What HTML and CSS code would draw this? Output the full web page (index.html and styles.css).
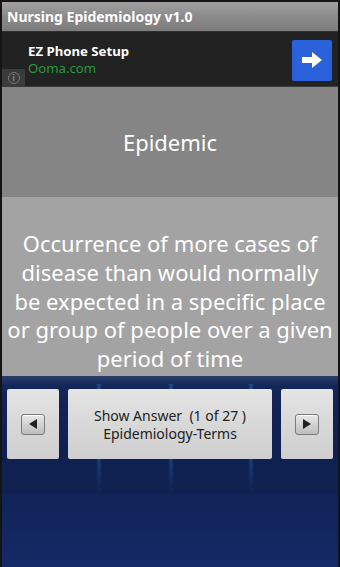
FILE: index.html
```html
<!DOCTYPE html>
<html>
<head>
<meta charset="utf-8">
<link rel="stylesheet" href="styles.css">
</head>
<body>
<div class="screen">
  <div class="titlebar">Nursing Epidemiology v1.0</div>
  <div class="ad">
    <div class="ad-info"><span class="ad-i">i</span></div>
    <div class="ad-text">
      <div class="ad-title">EZ Phone Setup</div>
      <div class="ad-url">Ooma.com</div>
    </div>
    <div class="ad-go">
      <svg width="22" height="18" viewBox="0 0 22 18"><path d="M1 6h10V1l10 8-10 8v-5H1z" fill="#fff"/></svg>
    </div>
  </div>
  <div class="term">Epidemic</div>
  <div class="definition">Occurrence of more cases of disease than would normally be expected in a specific place or group of people over a given period of time</div>
  <div class="bottom">
    <div class="controls">
      <div class="btn btn-side">
        <span class="arrow-box"><svg width="10" height="12" viewBox="0 0 10 12"><path d="M9 1L1 6l8 5z" fill="#222"/></svg></span>
      </div>
      <div class="btn btn-main">
        <div>Show Answer&nbsp; (1 of 27 )</div>
        <div>Epidemiology-Terms</div>
      </div>
      <div class="btn btn-side">
        <span class="arrow-box"><svg width="10" height="12" viewBox="0 0 10 12"><path d="M1 1l8 5-8 5z" fill="#222"/></svg></span>
      </div>
    </div>
  </div>
</div>
</body>
</html>
```
FILE: styles.css
```css
html, body {
  margin: 0;
  padding: 0;
  background: #111;
}
.screen {
  width: 336px;
  height: 565px;
  border: 2px solid #141414;
  border-bottom-width: 0;
  display: flex;
  flex-direction: column;
  font-family: "Noto Sans", "Open Sans", sans-serif;
  overflow: hidden;
}
.titlebar {
  height: 29px;
  background: linear-gradient(#a2a2a2, #8a8a8a 50%, #7c7c7c);
  color: #fff;
  font-weight: bold;
  font-size: 14px;
  line-height: 29px;
  padding-left: 5px;
  border-bottom: 1px solid #1d2d66;
  flex-shrink: 0;
}
.ad {
  height: 54px;
  background: #222;
  display: flex;
  align-items: center;
  position: relative;
  flex-shrink: 0;
  border-bottom: 1px solid #3a3a3a;
}
.ad-info {
  position: absolute;
  left: 0;
  bottom: 0;
  width: 23px;
  height: 17px;
  background: #3b3b3b;
  display: flex;
  align-items: center;
  justify-content: center;
}
.ad-i {
  width: 10px;
  height: 10px;
  border: 1.5px solid #777;
  border-radius: 50%;
  color: #777;
  font-size: 9px;
  font-weight: bold;
  line-height: 10px;
  text-align: center;
  font-family: "DejaVu Sans", sans-serif;
}
.ad-text {
  flex: 1;
  padding-left: 26px;
  padding-top: 1px;
}
.ad-title {
  color: #fff;
  font-weight: bold;
  font-size: 13.2px;
  line-height: 18px;
}
.ad-url {
  color: #249a3c;
  font-size: 13.2px;
  line-height: 17px;
}
.ad-go {
  width: 40px;
  height: 41px;
  background: #2b62db;
  border-radius: 2px;
  margin-right: 6px;
  margin-top: 2px;
  display: flex;
  align-items: center;
  justify-content: center;
}
.term {
  height: 110px;
  background: #858585;
  color: #fff;
  font-size: 22px;
  display: flex;
  align-items: center;
  justify-content: center;
  flex-shrink: 0;
}
.definition {
  height: 140px;
  background: #a3a3a3;
  color: #fff;
  font-size: 22px;
  line-height: 28.8px;
  text-align: center;
  padding: 32px 5px 7px;
  flex-shrink: 0;
}
.bottom {
  flex: 1;
  background:
    linear-gradient(to bottom, transparent 0, transparent 60%, #10214f 100%) 0 8px / 100% 110px no-repeat,
    linear-gradient(to right, transparent 94px, rgba(60,140,220,0.4) 97px, transparent 100px, transparent 166px, rgba(60,140,220,0.4) 169px, transparent 172px, transparent 246px, rgba(60,140,220,0.4) 249px, transparent 252px) 0 8px / 100% 110px no-repeat,
    linear-gradient(#2b3d6a, #132658 10px, #0f2050 40%, #142a66);
  padding: 13px 5px 0;
}
.controls {
  display: flex;
  gap: 9px;
  height: 70px;
}
.btn {
  background: linear-gradient(#e4e4e4, #d6d6d6 60%, #cfcfcf);
  border-radius: 2px;
  display: flex;
  align-items: center;
  justify-content: center;
}
.btn-side {
  width: 52px;
}
.btn-main {
  flex: 1;
  flex-direction: column;
  color: #222;
  font-size: 14px;
  line-height: 18px;
  padding-top: 1px;
}
.arrow-box {
  width: 22px;
  height: 19px;
  border: 1px solid #7a7a7a;
  border-radius: 3px;
  background: linear-gradient(#e8e8e8, #bdbdbd);
  display: flex;
  align-items: center;
  justify-content: center;
  box-shadow: inset 0 1px 0 #fff;
}
```
